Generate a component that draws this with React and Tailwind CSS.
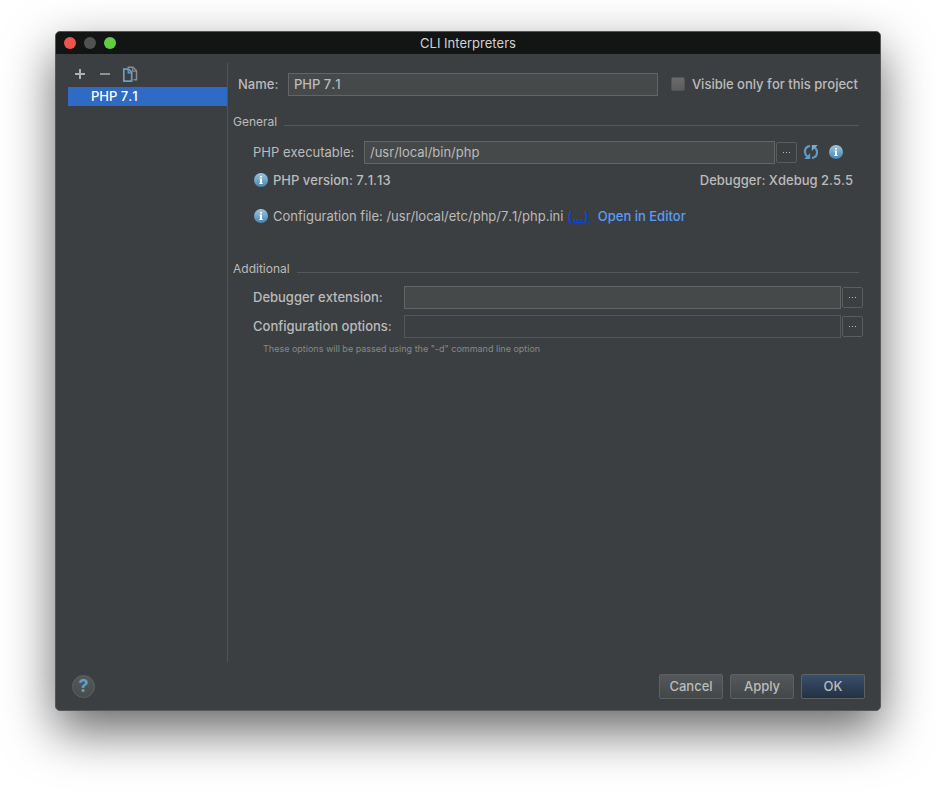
import React, { useState } from 'react';

const FIELD = 'h-[23px] min-w-0 flex-1 border border-[#646464] bg-[#45494a] px-[5px] pb-px text-[#bbbbbb] outline-none';

function InfoIcon() {
  return (
    <svg width="16" height="16" viewBox="0 0 16 16" className="shrink-0" aria-hidden="true">
      <defs>
        <linearGradient id="info-fill" x1="0" y1="0" x2="0" y2="1">
          <stop offset="0" stopColor="#9cc6e0" />
          <stop offset="1" stopColor="#4585b2" />
        </linearGradient>
      </defs>
      <circle cx="8" cy="8" r="7" fill="url(#info-fill)" />
      <path d="M7 4h2v1.500H7zM6.500 6.500H9V11h.7v1H6.300v-1H7V7.500h-.5z" fill="#fff" />
    </svg>
  );
}

function RefreshIcon() {
  return (
    <svg width="16" height="16" viewBox="0 0 16 16" aria-hidden="true">
      <g fill="none" stroke="#5b9bc8" strokeWidth="2.200">
        <path d="M7 1.900C3.600 2.600 1.700 5.200 2 8.300C2.200 10.200 3 11.500 4.300 12.600" />
        <path d="M9 14.100C12.400 13.400 14.300 10.800 14 7.700C13.800 5.800 13 4.500 11.700 3.400" />
      </g>
      <path d="M1.200 15h6V9z" fill="#5b9bc8" />
      <path d="M14.800 1h-6v6z" fill="#79aed1" />
    </svg>
  );
}

function CopyIcon() {
  return (
    <svg width="16" height="18" viewBox="0 0 16 18" fill="none" aria-hidden="true">
      <path d="M5.500 2.200H11l3.500 3.500v9H11.500" stroke="#8a8a8a" strokeWidth="1.500" />
      <path d="M10.500 2v4.200h4" stroke="#8a8a8a" strokeWidth="1.200" />
      <path d="M1.800 4.200h4.700l3.200 3.200v8.800H1.800z" fill="#3c3f41" stroke="#6d9fbd" strokeWidth="1.700" />
      <path d="M6.200 4v3.800h3.500" stroke="#6d9fbd" strokeWidth="1.300" />
    </svg>
  );
}

function BrowseButton({ label }) {
  return (
    <button
      type="button"
      aria-label={label}
      className="ml-px flex size-[21px] shrink-0 items-center justify-center rounded-xs border border-[#5a5d5e]"
    >
      <svg width="9" height="1" viewBox="0 0 9 1" fill="#bbbbbb" aria-hidden="true">
        <path d="M1 0h1v1H1zM4 0h1v1H4zM7 0h1v1H7z" />
      </svg>
    </button>
  );
}

function SectionTitle({ children }) {
  return (
    <div className="flex h-5 items-center gap-[7px]">
      <h2 className="text-xs font-normal">{children}</h2>
      <div className="mt-[6px] h-px flex-1 bg-[#555758]" />
    </div>
  );
}

function TitleBar() {
  return (
    <header className="grid h-[22px] grid-cols-[1fr_auto_1fr] items-center bg-[#131514] px-2">
      <div className="flex gap-2">
        <button type="button" aria-label="Close" className="size-3 rounded-full bg-[#ee534c]" />
        <button type="button" aria-label="Minimize" className="size-3 rounded-full bg-[#505150]" />
        <button type="button" aria-label="Zoom" className="size-3 rounded-full bg-[#62cd42]" />
      </div>
      <h1 className="font-normal text-[#d2d2d2]">CLI Interpreters</h1>
    </header>
  );
}

function Sidebar() {
  return (
    <aside className="w-40 shrink-0 border-r border-[#515355]">
      <div className="flex h-6 items-center gap-[9px] pb-[2px] pl-1">
        <button type="button" aria-label="Add" className="size-4">
          <svg width="16" height="16" viewBox="0 0 16 16" aria-hidden="true">
            <path d="M8 3v10M3 8h10" stroke="#afb1b3" strokeWidth="2" />
          </svg>
        </button>
        <button type="button" aria-label="Remove" className="size-4">
          <svg width="16" height="16" viewBox="0 0 16 16" aria-hidden="true">
            <path d="M3 8h10" stroke="#8f9193" strokeWidth="2" />
          </svg>
        </button>
        <button type="button" aria-label="Copy">
          <CopyIcon />
        </button>
      </div>
      <ul>
        <li className="h-[19px] bg-[#2f6ac5] pl-[23px] leading-[19px] text-white">PHP 7.1</li>
      </ul>
    </aside>
  );
}

function Settings() {
  const [name, setName] = useState('PHP 7.1');
  const [executable, setExecutable] = useState('/usr/local/bin/php');
  const [visible, setVisible] = useState(false);

  return (
    <main className="min-w-0 flex-1 pl-[5px] pr-[17px] pt-[10px]">
      <div className="flex items-center pl-[5px] pr-[5px]">
        <label htmlFor="name" className="w-[50px] pb-px">Name:</label>
        <input id="name" className={FIELD} value={name} onChange={(e) => setName(e.target.value)} />
        <label className="flex items-center gap-[7px] pb-px pl-[13px] whitespace-nowrap">
          <input
            type="checkbox"
            checked={visible}
            onChange={(e) => setVisible(e.target.checked)}
            className="size-[14px] appearance-none rounded-xs border border-[#525455] bg-linear-to-b from-[#6b6b6b] to-[#5d5d5d] checked:from-[#2f6ac5]"
          />
          Visible only for this project
        </label>
      </div>

      <section className="mt-4 pr-1">
        <SectionTitle>General</SectionTitle>
        <div className="mt-[9px] flex items-center pl-5 pr-[15px]">
          <label htmlFor="executable" className="w-[111px] pb-px font-normal">PHP executable:</label>
          <input
            id="executable"
            className={`${FIELD} font-normal`}
            value={executable}
            onChange={(e) => setExecutable(e.target.value)}
          />
          <BrowseButton label="Browse PHP executable" />
          <button type="button" aria-label="Reload" className="ml-[6px] pb-px">
            <RefreshIcon />
          </button>
          <button type="button" aria-label="Show PHP info" className="ml-[9px] pb-px">
            <InfoIcon />
          </button>
        </div>
        <div className="mt-[6px] flex h-5 items-center gap-1 pl-5 pr-[6px]">
          <InfoIcon />
          <span>PHP version: 7.1.13</span>
          <span className="ml-auto">Debugger: Xdebug 2.5.5</span>
        </div>
        <div className="mt-4 flex h-5 items-center gap-1 pl-5 whitespace-nowrap">
          <InfoIcon />
          <span className="font-normal">Configuration file: /usr/local/etc/php/7.1/php.ini</span>
          <a href="#scanned" className="text-[#0645e6] underline">(...)</a>
          <a href="#editor" className="ml-[5px] text-[#589df6]">Open in Editor</a>
        </div>
      </section>

      <section className="mt-[33px]">
        <div className="pr-1">
          <SectionTitle>Additional</SectionTitle>
        </div>
        <div className="mt-[7px] flex items-center pl-5">
          <label htmlFor="extension" className="w-[151px] pb-px">Debugger extension:</label>
          <input id="extension" className={FIELD} />
          <BrowseButton label="Browse debugger extension" />
        </div>
        <div className="mt-[6px] flex items-center pl-5">
          <label htmlFor="options" className="w-[151px] pb-px">Configuration options:</label>
          <input
            id="options"
            readOnly
            className="h-[23px] min-w-0 flex-1 border border-[#555758] bg-transparent px-[5px] outline-none"
          />
          <BrowseButton label="Edit configuration options" />
        </div>
        <p className="mt-[5px] pl-[30px] text-[9px] leading-3 font-normal text-[#85888a]">
          These options will be passed using the "-d" command line option
        </p>
      </section>
    </main>
  );
}

function Footer() {
  return (
    <footer className="flex h-12 items-center gap-[7px] px-[15px]">
      <button
        type="button"
        aria-label="Help"
        className="mr-auto ml-px size-[23px] rounded-full border border-[#5e6162] bg-linear-to-b from-[#555859] to-[#494c4d] text-lg leading-5 font-bold text-[#5f9fc9]"
      >
        ?
      </button>
      <button type="button" className="h-[25px] w-16 rounded-xs border border-[#5e6162] bg-linear-to-b from-[#54585a] to-[#434748]">
        Cancel
      </button>
      <button type="button" className="h-[25px] w-16 rounded-xs border border-[#5e6162] bg-linear-to-b from-[#54585a] to-[#434748]">
        Apply
      </button>
      <button type="button" className="h-[25px] w-16 rounded-xs border border-[#5e6162] bg-linear-to-b from-[#384f6b] to-[#233143]">
        OK
      </button>
    </footer>
  );
}

export default function App() {
  return (
    <div className="flex min-h-screen flex-col bg-white px-[55px] pt-[31px] pb-[79px] font-['Inter','Liberation_Sans',sans-serif] text-[13px] leading-4 font-medium text-[#bbbbbb] [font-kerning:none]">
      <div className="flex flex-1 flex-col overflow-hidden rounded-[5px] border border-[#55585a] bg-[#3c3f41] shadow-[0_20px_50px_rgba(0,0,0,0.6)]">
        <TitleBar />
        <div className="flex flex-1 pt-[9px] pl-3">
          <Sidebar />
          <Settings />
        </div>
        <Footer />
      </div>
    </div>
  );
}
